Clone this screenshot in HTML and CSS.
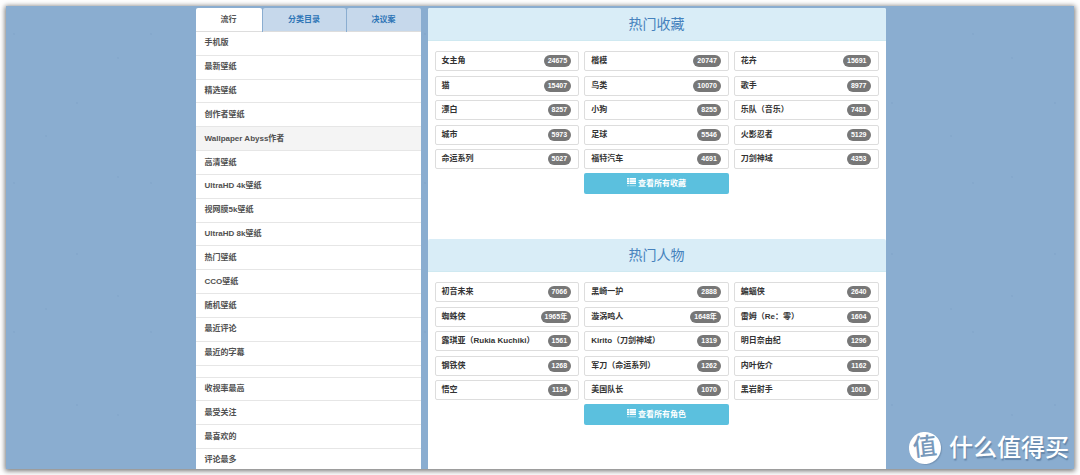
FILE: index.html
```html
<!DOCTYPE html>
<html lang="zh-CN">
<head>
<meta charset="utf-8">
<meta name="viewport" content="width=device-width, initial-scale=1">
<title>热门收藏</title>
<link rel="stylesheet" href="styles.css">
</head>
<body>
<div class="page">
  <div class="layout">
    <aside class="sidebar">
      <nav class="tabs">
        <button type="button" class="tab tab-active">流行</button>
        <button type="button" class="tab tab-wide">分类目录</button>
        <button type="button" class="tab tab-last">决议案</button>
      </nav>
      <nav class="menu">
        <a class="menu-item" href="#">手机版</a>
        <a class="menu-item" href="#">最新壁纸</a>
        <a class="menu-item" href="#">精选壁纸</a>
        <a class="menu-item" href="#">创作者壁纸</a>
        <a class="menu-item menu-current" href="#">Wallpaper Abyss作者</a>
        <a class="menu-item" href="#">高清壁纸</a>
        <a class="menu-item" href="#">UltraHD 4k壁纸</a>
        <a class="menu-item" href="#">视网膜5k壁纸</a>
        <a class="menu-item" href="#">UltraHD 8k壁纸</a>
        <a class="menu-item" href="#">热门壁纸</a>
        <a class="menu-item" href="#">CCO壁纸</a>
        <a class="menu-item" href="#">随机壁纸</a>
        <a class="menu-item" href="#">最近评论</a>
        <a class="menu-item" href="#">最近的字幕</a>
        <div class="menu-gap"></div>
        <a class="menu-item" href="#">收视率最高</a>
        <a class="menu-item" href="#">最受关注</a>
        <a class="menu-item" href="#">最喜欢的</a>
        <a class="menu-item" href="#">评论最多</a>
      </nav>
    </aside>
    <main class="content">
      <section class="panel">
        <h2 class="panel-title">热门收藏</h2>
        <div class="panel-body">
          <div class="cards">
            <a class="card" href="#">女主角<span class="badge">24675</span></a>
            <a class="card" href="#">楷模<span class="badge">20747</span></a>
            <a class="card" href="#">花卉<span class="badge">15691</span></a>
            <a class="card" href="#">猫<span class="badge">15407</span></a>
            <a class="card" href="#">鸟类<span class="badge">10070</span></a>
            <a class="card" href="#">歌手<span class="badge">8977</span></a>
            <a class="card" href="#">漂白<span class="badge">8257</span></a>
            <a class="card" href="#">小狗<span class="badge">8255</span></a>
            <a class="card" href="#">乐队（音乐）<span class="badge">7481</span></a>
            <a class="card" href="#">城市<span class="badge">5973</span></a>
            <a class="card" href="#">足球<span class="badge">5546</span></a>
            <a class="card" href="#">火影忍者<span class="badge">5129</span></a>
            <a class="card" href="#">命运系列<span class="badge">5027</span></a>
            <a class="card" href="#">福特汽车<span class="badge">4691</span></a>
            <a class="card" href="#">刀剑神域<span class="badge">4353</span></a>
          </div>
          <div class="actions">
            <a class="view-all" href="#">
              <svg class="list-icon" viewBox="0 0 9 9" aria-hidden="true"><path d="M0 0h2v1.800H0zM2.500 0H9v1.800H2.500zM0 2.300h2v1.700H0zM2.500 2.300H9v1.700H2.500zM0 4.500h2V6H0zM2.500 4.500H9V6H2.500z"/><path opacity=".5" d="M0 7.300h2v1H0zM2.500 7.300H9v1H2.500z"/></svg>
              查看所有收藏</a>
          </div>
        </div>
      </section>
      <section class="panel">
        <h2 class="panel-title">热门人物</h2>
        <div class="panel-body">
          <div class="cards">
            <a class="card" href="#">初音未来<span class="badge">7066</span></a>
            <a class="card" href="#">黑崎一护<span class="badge">2888</span></a>
            <a class="card" href="#">蝙蝠侠<span class="badge">2640</span></a>
            <a class="card" href="#">蜘蛛侠<span class="badge">1965年</span></a>
            <a class="card" href="#">漩涡鸣人<span class="badge">1648年</span></a>
            <a class="card" href="#">雷姆（Re：零）<span class="badge">1604</span></a>
            <a class="card" href="#">露琪亚（Rukia Kuchiki）<span class="badge">1561</span></a>
            <a class="card" href="#">Kirito（刀剑神域）<span class="badge">1319</span></a>
            <a class="card" href="#">明日奈由纪<span class="badge">1296</span></a>
            <a class="card" href="#">钢铁侠<span class="badge">1268</span></a>
            <a class="card" href="#">军刀（命运系列）<span class="badge">1262</span></a>
            <a class="card" href="#">内叶佐介<span class="badge">1162</span></a>
            <a class="card" href="#">悟空<span class="badge">1134</span></a>
            <a class="card" href="#">美国队长<span class="badge">1070</span></a>
            <a class="card" href="#">黑岩射手<span class="badge">1001</span></a>
          </div>
          <div class="actions">
            <a class="view-all" href="#">
              <svg class="list-icon" viewBox="0 0 9 9" aria-hidden="true"><path d="M0 0h2v1.800H0zM2.500 0H9v1.800H2.500zM0 2.300h2v1.700H0zM2.500 2.300H9v1.700H2.500zM0 4.500h2V6H0zM2.500 4.500H9V6H2.500z"/><path opacity=".5" d="M0 7.300h2v1H0zM2.500 7.300H9v1H2.500z"/></svg>
              查看所有角色</a>
          </div>
        </div>
      </section>
    </main>
  </div>
  <div class="watermark"><span class="seal">值</span><span>什么值得买</span></div>
</div>
</body>
</html>
```
FILE: styles.css
```css
* {
  box-sizing: border-box;
}

body {
  margin: 0;
  height: 100vh;
  padding: 6px;
  background: #fff;
  font: bold 8px/12px "Liberation Sans", "Noto Sans CJK SC", sans-serif;
  color: #333;
}

a {
  color: inherit;
  text-decoration: none;
}

.page {
  position: relative;
  height: 100%;
  overflow: hidden;
  padding: 2px 12px 0 13px;
  background-color: #8aadd0;
  background-image:
    radial-gradient(circle at 8px 28px, #7c9fc4 0, transparent 1px),
    radial-gradient(circle at 71px 97px, #7a9dc3 0, transparent 1px),
    radial-gradient(circle at 112px 52px, #7c9fc4 0, transparent 1px),
    radial-gradient(circle at 40px 130px, #7c9fc4 0, transparent 1px);
  background-size: 137px 149px, 163px 151px, 149px 119px, 181px 173px;
  box-shadow: 0 1px 5px 1px #777;
}

.layout {
  display: grid;
  grid-template-columns: 225fr 458fr;
  gap: 7px;
  max-width: 690px;
  height: 100%;
  margin: 0 auto;
}

.sidebar {
  display: flex;
  flex-direction: column;
  min-height: 0;
}

.tabs {
  display: flex;
  flex: none;
  gap: 1px;
}

.tab {
  flex: 66;
  height: 24px;
  padding: 0;
  border: 0;
  border-bottom: 1px solid #ddd;
  border-radius: 2px 2px 0 0;
  background: #c6d8eb;
  color: #2e75b6;
  font: inherit;
}

.tab-active {
  background: #fff;
  color: #555;
}

.tab-wide {
  flex: 83;
}

.tab-last {
  flex: 74;
}

.menu {
  display: flex;
  flex: 1;
  flex-direction: column;
  margin-bottom: -3px;
  background: #fff;
}

.menu-item {
  display: flex;
  flex: 1 0 23px;
  align-items: center;
  padding: 0 9px;
  border-bottom: 1px solid #e6e6e6;
  color: #505050;
}

.menu-current {
  background: #f4f4f4;
}

.menu-gap {
  flex: none;
  height: 12px;
  border-bottom: 1px solid #e6e6e6;
}

.content {
  background: #fff;
  border-radius: 2px 2px 0 0;
}

.panel-title {
  margin: 0;
  border-bottom: 1px solid #cfe9f1;
  border-radius: 2px 2px 0 0;
  background: #d9edf7;
  color: #4682bd;
  font-size: 14px;
  font-weight: normal;
  line-height: 32px;
  text-align: center;
}

.panel-body {
  padding: 10px 7px 45px;
}

.cards {
  display: grid;
  grid-template-columns: repeat(3, 1fr);
  column-gap: 5px;
  align-content: space-between;
  min-height: 118px;
}

.card {
  display: flex;
  align-items: center;
  justify-content: space-between;
  height: 20px;
  padding: 0 7px 0 6px;
  border: 1px solid #ddd;
  border-radius: 2px;
  color: #333;
}

.badge {
  padding: 0 4px;
  border-radius: 6px;
  background: #777;
  color: #fff;
  font-size: 7px;
}

.actions {
  display: grid;
  grid-template-columns: repeat(3, 1fr);
  column-gap: 5px;
  padding-top: 4px;
}

.view-all {
  display: flex;
  grid-column: 2;
  align-items: center;
  justify-content: center;
  gap: 2px;
  height: 21px;
  border-radius: 2px;
  background: #5bc0de;
  color: #fff;
}

.list-icon {
  width: 9px;
  height: 9px;
  margin-bottom: 3px;
  fill: #fff;
}

.watermark {
  position: absolute;
  right: 5px;
  bottom: 5px;
  display: flex;
  align-items: center;
  gap: 8px;
  color: #fff;
  font-size: 24px;
  font-weight: 500;
  line-height: 32px;
  text-shadow: 1px 2px 1px #6587aa;
}

.seal {
  width: 32px;
  height: 32px;
  border-radius: 50%;
  background: #fff;
  box-shadow: 1px 1px 1px #7695b6;
  color: #7899bb;
  font-size: 24px;
  line-height: 30px;
  text-align: center;
  text-shadow: none;
  transform: rotate(-6deg);
}
```
